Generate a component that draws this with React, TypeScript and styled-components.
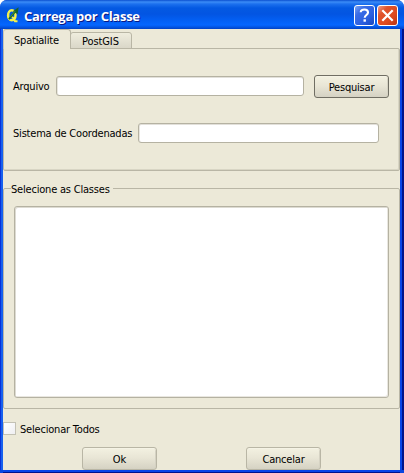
import React from "react";
import styled, { createGlobalStyle } from "styled-components";

const GlobalStyle = createGlobalStyle`
  * { box-sizing: border-box; }
  html, body { margin: 0; padding: 0; background: #fff; overflow: hidden; }
`;

const Window = styled.div`
  width: 404px;
  height: 473px;
  display: flex;
  flex-direction: column;
  border-radius: 7px 7px 0 0;
  overflow: hidden;
  background: #0845e0;
  font-family: "DejaVu Sans Condensed", "DejaVu Sans", sans-serif;
  font-stretch: condensed;
  font-size: 11px;
  color: #000;
`;

const TitleBar = styled.header`
  height: 29px;
  flex: none;
  display: flex;
  align-items: center;
  padding: 2px 6px 0 6px;
  background: linear-gradient(
    to bottom,
    #0b4fd0 0,
    #3b8cf7 2px,
    #1c70ee 4px,
    #0459e2 8px,
    #0355e2 14px,
    #0360f5 21px,
    #0566ff 25px,
    #0356e4 27px,
    #0141c5 29px
  );
`;

const Title = styled.h1`
  flex: 1;
  margin: 0 0 0 4px;
  font-family: "Open Sans", sans-serif;
  font-stretch: normal;
  font-size: 13px;
  line-height: 18px;
  font-weight: 700;
  letter-spacing: -0.26px;
  white-space: nowrap;
  color: #fff;
  text-shadow: 1px 1px 0 #0a1883;
`;

const CaptionButton = styled.button<{ $close?: boolean }>`
  width: 21px;
  height: 21px;
  margin-left: 2px;
  padding: 0;
  display: grid;
  place-items: center;
  border: 1px solid #fff;
  border-radius: 3px;
  background: ${(p) =>
    p.$close
      ? "linear-gradient(135deg, #f0a088 0%, #e0532c 28%, #dd4a20 65%, #b93412 100%)"
      : "linear-gradient(135deg, #7ba4f3 0%, #3a6de6 28%, #2a5fe0 65%, #1746bd 100%)"};
`;

const Client = styled.main`
  flex: none;
  width: 397px;
  height: 441px;
  margin-left: 3px;
  display: flex;
  flex-direction: column;
  background: #ece9d8;
  box-shadow: -2px 0 0 #1660ee, -3px 0 0 #0831d9, 2px 0 0 #0844e8, 4px 0 0 #00138c, 0 2px 0 #0844e8, 0 3px 0 #00138c;
`;

const Tabs = styled.div`
  height: 20px;
  flex: none;
  display: flex;
  align-items: flex-end;
`;

const Tab = styled.div<{ $active?: boolean }>`
  position: relative;
  z-index: ${(p) => (p.$active ? 1 : 0)};
  width: ${(p) => (p.$active ? 68 : 62)}px;
  height: ${(p) => (p.$active ? 20 : 17)}px;
  margin-left: ${(p) => (p.$active ? 0 : -1)}px;
  padding: ${(p) => (p.$active ? "4px 0 0 10px" : "2px 0 0 11px")};
  line-height: 14px;
  border: 1px solid #b9b6a5;
  border-bottom: ${(p) => (p.$active ? "0" : "1px solid #b9b6a5")};
  border-left-color: ${(p) => (p.$active ? "#c9c6b5" : "#b9b6a5")};
  border-radius: 3px 3px 0 0;
  background: ${(p) => (p.$active ? "#ece9d8" : "linear-gradient(#efedde, #dad7c8)")};
`;

const Label = styled.span<{ $tracking?: number }>`
  white-space: nowrap;
  line-height: 14px;
  letter-spacing: ${(p) => p.$tracking ?? -0.2}px;
`;

const TabPage = styled.section`
  height: 123px;
  flex: none;
  margin-top: -1px;
  padding: 26px 10px 0 9px;
  border: 1px solid #b9b6a5;
  border-radius: 0 2px 2px 2px;
  box-shadow: inset -1px -1px 0 #d8d5c4;
`;

const FieldRow = styled.div<{ $top?: number; $end?: number; $labelWidth: number }>`
  margin-top: ${(p) => p.$top ?? 0}px;
  padding-right: ${(p) => p.$end ?? 0}px;
  display: grid;
  grid-template-columns: ${(p) => p.$labelWidth}px 1fr auto;
  align-items: start;

  > ${Label} {
    padding-top: 5px;
  }
`;

const TextInput = styled.input`
  width: 100%;
  min-width: 0;
  height: 20px;
  margin-top: 1px;
  padding: 0 4px;
  font: inherit;
  outline: none;
  border: 1px solid #b5b2a2;
  border-radius: 3px;
  background: #fff;
  box-shadow: inset 0 1px 0 #e2e0da, inset 1px 0 0 #e9e7e0;
`;

const PushButton = styled.button<{ $focused?: boolean }>`
  width: 75px;
  height: 23px;
  padding: 2px 0 0;
  font: inherit;
  color: #000;
  border: 1px solid ${(p) => (p.$focused ? "#706e63" : "#b9b6a5")};
  border-radius: 3px;
  background: linear-gradient(#f3f1e1, #e9e6d6 45%, #d5d2c3);
  box-shadow: inset 0 1px 0 #f5f3e5, inset -1px 0 0 #d5d2c3;
`;

const SearchButton = styled(PushButton)`
  margin-left: 10px;
`;

const ClassGroup = styled.fieldset`
  position: relative;
  flex: none;
  width: 397px;
  height: 221px;
  margin: 17px 0 0;
  padding: 17px 10px 10px;
  display: flex;
  border: 1px solid #b9b6a5;
  border-radius: 2px;
`;

const GroupTitle = styled.div`
  position: absolute;
  top: -6px;
  left: 7px;
  height: 14px;
  padding-right: 3px;
  background: #ece9d8;
  display: flex;
`;

const ClassList = styled.div`
  flex: 1;
  height: 192px;
  border: 1px solid #b5b2a2;
  border-radius: 3px;
  background: #fff;
  box-shadow: inset 1px 1px 0 #dddbd2, inset -1px -1px 0 #e9e7e0;
`;

const SelectAll = styled.label`
  height: 13px;
  flex: none;
  margin-top: 13px;
  display: flex;
  align-items: center;
  gap: 4px;

  > ${Label} {
    padding-top: 3px;
  }
`;

const CheckBox = styled.span`
  width: 13px;
  height: 13px;
  border: 1px solid #c3c1b4;
  background: linear-gradient(135deg, #fff, #efeff2);
`;

const Actions = styled.footer`
  display: flex;
  flex: none;
  margin-top: 12px;
  padding-left: 79px;
  gap: 89px;
`;

const QgisIcon = () => (
  <svg width="14" height="18" viewBox="0 0 14 18">
    <ellipse cx="5.8" cy="8.2" rx="3.7" ry="5" fill="none" stroke="#f3f04b" strokeWidth="2.5" />
    <path d="M5.5 9.7l2 1.5 1.5 3H11.5" fill="none" stroke="#f3f04b" strokeWidth="2" />
    <path d="M3 12.2L9.5 4.2" fill="none" stroke="#18612d" strokeWidth="2" />
    <path d="M6.8 4.2L12.6 0.3 11.6 7.2z" fill="#18612d" />
    <path d="M4.5 9.7L9 4.2" fill="none" stroke="#4aa542" strokeWidth="0.8" />
  </svg>
);

export default function App() {
  return (
    <>
      <GlobalStyle />
      <Window>
        <TitleBar>
          <QgisIcon />
          <Title>Carrega por Classe</Title>
          <CaptionButton aria-label="Ajuda">
            <svg width="19" height="19" viewBox="0 0 19 19">
              <path d="M5.7 6.2C5.7 2.7 13 2.5 13 6.5c0 2.5-3.3 2.5-3.3 5.3" fill="none" stroke="#fff" strokeWidth="2.1" />
              <rect x="8.5" y="13.3" width="2.4" height="2.4" fill="#fff" />
            </svg>
          </CaptionButton>
          <CaptionButton $close aria-label="Fechar">
            <svg width="19" height="19" viewBox="0 0 19 19">
              <path d="M4.3 4.3l10.4 10.4M14.7 4.3L4.3 14.7" stroke="#fff" strokeWidth="2.2" />
            </svg>
          </CaptionButton>
        </TitleBar>
        <Client>
          <Tabs>
            <Tab $active>
              <Label>Spatialite</Label>
            </Tab>
            <Tab>
              <Label $tracking={-0.1}>PostGIS</Label>
            </Tab>
          </Tabs>
          <TabPage>
            <FieldRow $labelWidth={43}>
              <Label>Arquivo</Label>
              <TextInput />
              <SearchButton $focused>
                <Label>Pesquisar</Label>
              </SearchButton>
            </FieldRow>
            <FieldRow $top={24} $end={10} $labelWidth={125}>
              <Label>Sistema de Coordenadas</Label>
              <TextInput />
            </FieldRow>
          </TabPage>
          <ClassGroup>
            <GroupTitle>
              <Label>Selecione as Classes</Label>
            </GroupTitle>
            <ClassList />
          </ClassGroup>
          <SelectAll>
            <CheckBox />
            <Label>Selecionar Todos</Label>
          </SelectAll>
          <Actions>
            <PushButton>
              <Label $tracking={0}>Ok</Label>
            </PushButton>
            <PushButton>
              <Label>Cancelar</Label>
            </PushButton>
          </Actions>
        </Client>
      </Window>
    </>
  );
}
